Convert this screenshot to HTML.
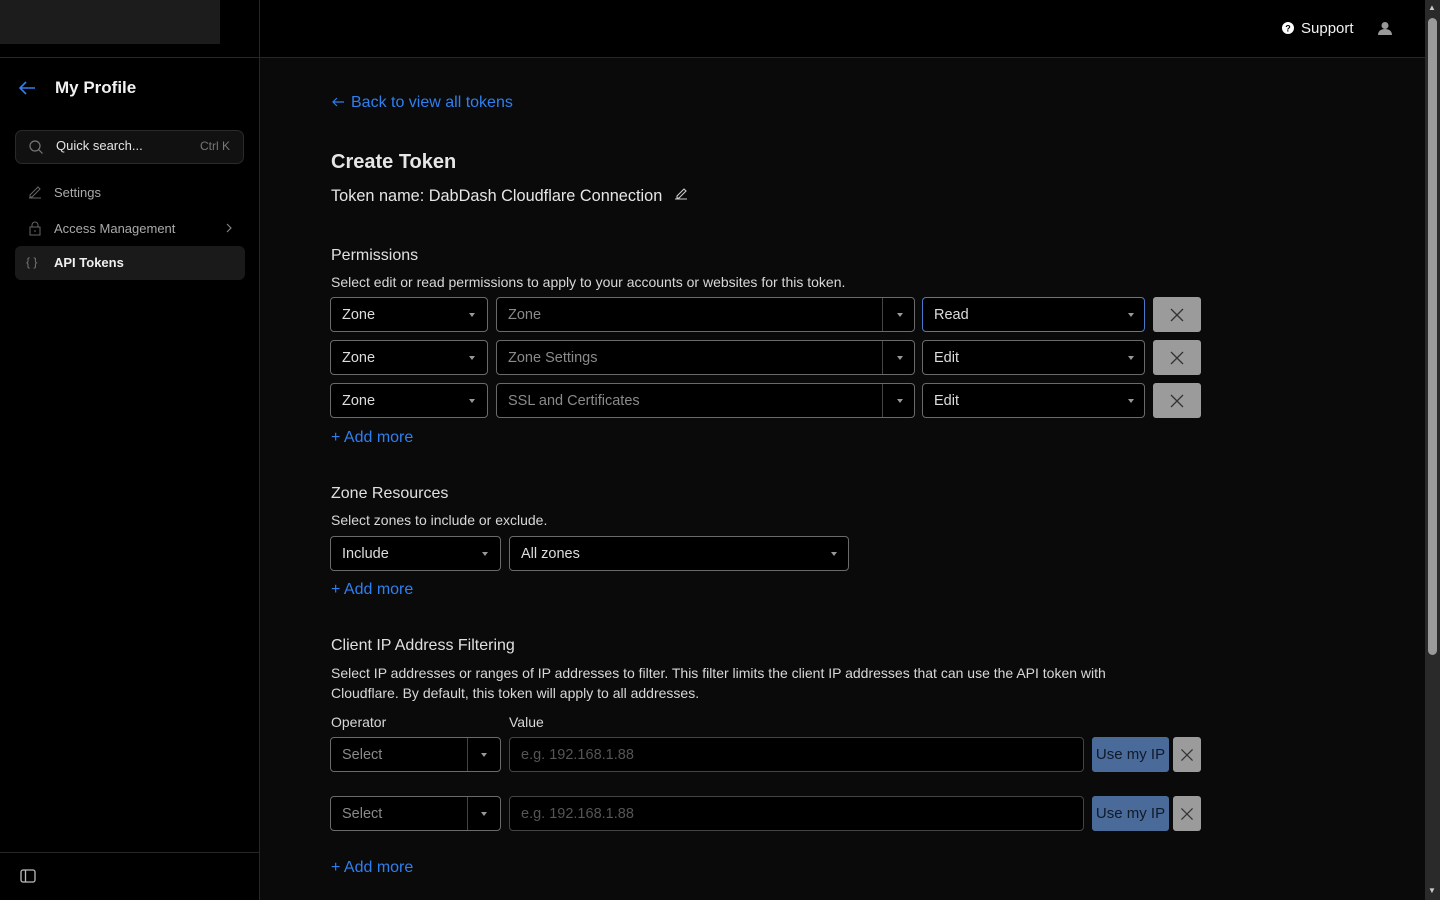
<!DOCTYPE html>
<html><head><meta charset="utf-8"><style>
*{box-sizing:border-box;margin:0;padding:0}
body{width:1440px;height:900px;overflow:hidden;background:#0a0a0a;font-family:"Liberation Sans",sans-serif;color:#e6e6e6;position:relative}
.a{position:absolute}
.sb{left:0;top:0;width:260px;height:900px;background:#000;border-right:1px solid #262626}
.hdr{left:260px;top:0;width:1165px;height:58px;background:#000;border-bottom:1px solid #262626}
.sel{position:absolute;height:35px;background:#000;border:1px solid #6a6a6a;border-radius:4px;font-size:14.5px;padding-left:11px;line-height:35px;color:#ddd}
.sel.ph{color:#8a8a8a}
.car{position:absolute;top:15px;width:0;height:0;border-left:3.5px solid transparent;border-right:3.5px solid transparent;border-top:4px solid #999}
.div{position:absolute;top:0;bottom:0;width:1px;background:#444}
.xb{position:absolute;background:#9b9b9b;border-radius:3px}
.xb svg{position:absolute;left:50%;top:50%;transform:translate(-50%,-50%)}
.blue{color:#2f7ff0}
.t{position:absolute;white-space:nowrap}
.ip{position:absolute;height:35px;background:#000;border:1px solid #444;border-radius:4px;font-size:14.5px;color:#555;padding-left:11px;line-height:35px}
.use{position:absolute;height:35px;background:#4a6a99;border-radius:3px;color:#0f1a2a;font-size:15px;line-height:35px;text-align:center}
</style></head><body>
<div class="a sb"></div>
<div class="a" style="left:0;top:0;width:220px;height:44px;background:#1c1c1c"></div>
<div class="a" style="left:0;top:57px;width:259px;height:1px;background:#262626"></div>
<svg class="a" style="left:17px;top:80px" width="20" height="16" viewBox="0 0 20 16"><path d="M18 8H3M9 2L3 8l6 6" stroke="#2f7ff0" stroke-width="1.6" fill="none"/></svg>
<div class="t" style="left:55px;top:78px;font-size:17px;font-weight:bold;color:#f2f2f2">My Profile</div>
<div class="a" style="left:15px;top:130px;width:229px;height:34px;background:#111;border:1px solid #2a2a2a;border-radius:7px"></div>
<svg class="a" style="left:28px;top:139px" width="16" height="16" viewBox="0 0 16 16"><circle cx="7" cy="7" r="5" stroke="#777" fill="none" stroke-width="1.2"/><path d="M11 11l3.5 3.5" stroke="#777" stroke-width="1.2"/></svg>
<div class="t" style="left:56px;top:138px;font-size:13px;color:#e6e6e6">Quick search...</div>
<div class="t" style="left:200px;top:139px;font-size:12px;color:#777">Ctrl K</div>
<svg class="a" style="left:27px;top:184px" width="16" height="16" viewBox="0 0 16 16"><path d="M2 14h12M3 11l8-8 2 2-8 8H3z" stroke="#666" fill="none" stroke-width="1"/></svg>
<div class="t" style="left:54px;top:185px;font-size:13px;color:#aaa">Settings</div>
<svg class="a" style="left:27px;top:220px" width="16" height="16" viewBox="0 0 16 16"><rect x="3" y="7" width="10" height="8" stroke="#666" fill="none"/><path d="M5 7V5a3 3 0 016 0v2M8 10v2" stroke="#666" fill="none"/></svg>
<div class="t" style="left:54px;top:221px;font-size:13px;color:#aaa">Access Management</div>
<svg class="a" style="left:225px;top:223px" width="8" height="10" viewBox="0 0 8 10"><path d="M2 1l4 4-4 4" stroke="#888" fill="none" stroke-width="1.1"/></svg>
<div class="a" style="left:15px;top:246px;width:230px;height:34px;background:#1a1a1a;border-radius:6px"></div>
<div class="t" style="left:26px;top:255px;font-size:12px;color:#777">{ }</div>
<div class="t" style="left:54px;top:255px;font-size:13px;color:#f0f0f0;font-weight:bold">API Tokens</div>
<div class="a" style="left:0;top:852px;width:259px;height:1px;background:#262626"></div>
<svg class="a" style="left:20px;top:869px" width="17" height="15" viewBox="0 0 17 15"><rect x="1" y="1" width="14" height="12" rx="2" stroke="#bbb" fill="none" stroke-width="1.3"/><path d="M5.5 1v12" stroke="#bbb" stroke-width="1.3"/></svg>

<div class="a hdr"></div>
<svg class="a" style="left:1282px;top:22px" width="12" height="12" viewBox="0 0 12 12"><circle cx="6" cy="6" r="6" fill="#fff"/><text x="6" y="9.5" font-size="9" font-weight="bold" text-anchor="middle" fill="#000" font-family="Liberation Sans">?</text></svg>
<div class="t" style="left:1301px;top:20px;font-size:15px;color:#f2f2f2">Support</div>
<svg class="a" style="left:1378px;top:21px" width="14" height="14" viewBox="0 0 14 14"><circle cx="7" cy="4.5" r="3.5" fill="#999"/><path d="M0 14c0-4 3-6 7-6s7 2 7 6z" fill="#999"/></svg>
<div class="a" style="left:1425px;top:0;width:15px;height:900px;background:#2a2a2a"></div>
<div class="a" style="left:1428px;top:18px;width:9px;height:637px;background:#9a9a9a;border-radius:5px"></div>
<div class="t" style="left:1428px;top:3px;font-size:8px;color:#ccc">▲</div>
<div class="t" style="left:1428px;top:886px;font-size:8px;color:#ccc">▼</div>

<svg class="a" style="left:331px;top:96px" width="14" height="12" viewBox="0 0 14 12"><path d="M13 6H2M6 2L2 6l4 4" stroke="#2f7ff0" stroke-width="1.2" fill="none"/></svg>
<div class="t blue" style="left:351px;top:94px;font-size:16px">Back to view all tokens</div>
<div class="t" style="left:331px;top:151px;font-size:20px;font-weight:bold;color:#e6e6e6">Create Token</div>
<div class="t" style="left:331px;top:187px;font-size:16.3px;color:#e6e6e6">Token name: DabDash Cloudflare Connection</div>
<svg class="a" style="left:674px;top:185px" width="15" height="15" viewBox="0 0 15 15"><path d="M1 14h12M3 11l7-7 2 2-7 7H3z" stroke="#ccc" fill="none" stroke-width="1.1"/></svg>

<div class="t" style="left:331px;top:247px;font-size:16px;color:#e0e0e0">Permissions</div>
<div class="t" style="left:331px;top:274px;font-size:14px;color:#d8d8d8">Select edit or read permissions to apply to your accounts or websites for this token.</div>

<div class="sel" style="left:330px;top:297px;width:158px">Zone<i class="car" style="left:138px"></i></div>
<div class="sel ph" style="left:496px;top:297px;width:419px">Zone<span class="div" style="left:385px"></span><i class="car" style="left:400px"></i></div>
<div class="sel" style="left:922px;top:297px;width:223px;border-color:#4a78c8">Read<i class="car" style="left:205px"></i></div>
<div class="xb" style="left:1153px;top:297px;width:48px;height:35px"><svg width="14" height="14" viewBox="0 0 14 14"><path d="M1 1l12 12M13 1L1 13" stroke="#333" stroke-width="1.3"/></svg></div>

<div class="sel" style="left:330px;top:340px;width:158px">Zone<i class="car" style="left:138px"></i></div>
<div class="sel ph" style="left:496px;top:340px;width:419px">Zone Settings<span class="div" style="left:385px"></span><i class="car" style="left:400px"></i></div>
<div class="sel" style="left:922px;top:340px;width:223px">Edit<i class="car" style="left:205px"></i></div>
<div class="xb" style="left:1153px;top:340px;width:48px;height:35px"><svg width="14" height="14" viewBox="0 0 14 14"><path d="M1 1l12 12M13 1L1 13" stroke="#333" stroke-width="1.3"/></svg></div>

<div class="sel" style="left:330px;top:383px;width:158px">Zone<i class="car" style="left:138px"></i></div>
<div class="sel ph" style="left:496px;top:383px;width:419px">SSL and Certificates<span class="div" style="left:385px"></span><i class="car" style="left:400px"></i></div>
<div class="sel" style="left:922px;top:383px;width:223px">Edit<i class="car" style="left:205px"></i></div>
<div class="xb" style="left:1153px;top:383px;width:48px;height:35px"><svg width="14" height="14" viewBox="0 0 14 14"><path d="M1 1l12 12M13 1L1 13" stroke="#333" stroke-width="1.3"/></svg></div>

<div class="t blue" style="left:331px;top:429px;font-size:16px">+ Add more</div>

<div class="t" style="left:331px;top:485px;font-size:16px;color:#e0e0e0">Zone Resources</div>
<div class="t" style="left:331px;top:512px;font-size:14px;color:#d8d8d8">Select zones to include or exclude.</div>
<div class="sel" style="left:330px;top:536px;width:171px">Include<i class="car" style="left:151px"></i></div>
<div class="sel" style="left:509px;top:536px;width:340px">All zones<i class="car" style="left:321px"></i></div>
<div class="t blue" style="left:331px;top:581px;font-size:16px">+ Add more</div>

<div class="t" style="left:331px;top:637px;font-size:16px;color:#e0e0e0">Client IP Address Filtering</div>
<div class="t" style="left:331px;top:663px;font-size:14px;color:#d8d8d8;line-height:20px">Select IP addresses or ranges of IP addresses to filter. This filter limits the client IP addresses that can use the API token with<br>Cloudflare. By default, this token will apply to all addresses.</div>
<div class="t" style="left:331px;top:714px;font-size:14px;color:#d8d8d8">Operator</div>
<div class="t" style="left:509px;top:714px;font-size:14px;color:#d8d8d8">Value</div>

<div class="sel ph" style="left:330px;top:737px;width:171px">Select<span class="div" style="left:136px"></span><i class="car" style="left:150px"></i></div>
<div class="ip" style="left:509px;top:737px;width:575px">e.g. 192.168.1.88</div>
<div class="use" style="left:1092px;top:737px;width:77px">Use my IP</div>
<div class="xb" style="left:1173px;top:737px;width:28px;height:35px"><svg width="13" height="13" viewBox="0 0 14 14"><path d="M1 1l12 12M13 1L1 13" stroke="#333" stroke-width="1.3"/></svg></div>

<div class="sel ph" style="left:330px;top:796px;width:171px">Select<span class="div" style="left:136px"></span><i class="car" style="left:150px"></i></div>
<div class="ip" style="left:509px;top:796px;width:575px">e.g. 192.168.1.88</div>
<div class="use" style="left:1092px;top:796px;width:77px">Use my IP</div>
<div class="xb" style="left:1173px;top:796px;width:28px;height:35px"><svg width="13" height="13" viewBox="0 0 14 14"><path d="M1 1l12 12M13 1L1 13" stroke="#333" stroke-width="1.3"/></svg></div>

<div class="t blue" style="left:331px;top:859px;font-size:16px">+ Add more</div>
</body></html>
